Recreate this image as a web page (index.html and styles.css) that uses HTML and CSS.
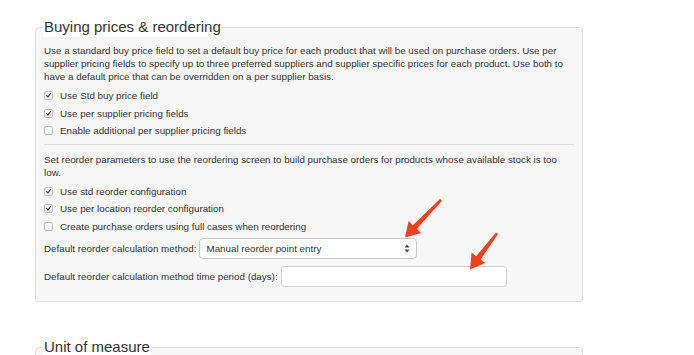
FILE: index.html
```html
<!DOCTYPE html>
<html lang="en">
<head>
    <meta charset="UTF-8">
    <title>Buying prices &amp; reordering</title>
    <link rel="stylesheet" href="styles.css">
</head>
<body>
    <div class="page">
        <fieldset class="panel">
            <legend>Buying prices &amp; reordering</legend>
            <p>Use a standard buy price field to set a default buy price for each product that will be used on purchase orders. Use per supplier pricing fields to specify up to three preferred suppliers and supplier specific prices for each product. Use both to have a default price that can be overridden on a per supplier basis.</p>
            <div class="checks">
                <label class="check"><span class="box checked"></span>Use Std buy price field</label>
                <label class="check"><span class="box checked"></span>Use per supplier pricing fields</label>
                <label class="check"><span class="box"></span>Enable additional per supplier pricing fields</label>
            </div>
            <hr>
            <p>Set reorder parameters to use the reordering screen to build purchase orders for products whose available stock is too low.</p>
            <div class="checks">
                <label class="check"><span class="box checked"></span>Use std reorder configuration</label>
                <label class="check"><span class="box checked"></span>Use per location reorder configuration</label>
                <label class="check"><span class="box"></span>Create purchase orders using full cases when reordering</label>
            </div>
            <div class="field">
                <span class="label">Default reorder calculation method:</span>
                <div class="select">
                    <span>Manual reorder point entry</span>
                    <svg class="updown" width="6" height="9" viewBox="0 0 6 9"><path d="M3 0.5 L5.5 3.5 H0.5 Z M3 8.5 L5.5 5.5 H0.5 Z" fill="#444"/></svg>
                </div>
            </div>
            <div class="field">
                <span class="label">Default reorder calculation method time period (days):</span>
                <input class="text" type="text">
            </div>
        </fieldset>

        <fieldset class="panel next">
            <legend>Unit of measure</legend>
        </fieldset>
    </div>

    <!-- annotation arrows -->
    <svg class="arrows" width="694" height="355" viewBox="0 0 694 355">
        <polygon points="405,237.5 421,233 416.8,228.8 442,200.8 440,199 412.8,225.2 408.6,221" fill="#f2401e"/>
        <polygon points="470,269.5 485.2,263 480.6,259.4 498,234 496,232.4 476.2,256.2 471.6,252.6" fill="#f2401e"/>
    </svg>
</body>
</html>
```

FILE: styles.css
```css
body {
    margin: 0;
    background: #fff;
    font-family: "Liberation Sans", Arial, sans-serif;
    font-size: 9.8px;
    color: #333;
}
.page {
    padding: 17px 0 0 35px;
    width: 548px;
}
.panel {
    margin: 0;
    padding: 2px 8px 14px 8px;
    border: 1px solid #e1e1e1;
    border-radius: 4px;
    background: #f7f7f7;
    min-width: 0;
}
.panel legend {
    font-size: 15px;
    padding: 0 1px;
    margin-left: -1px;
    background: #fff;
    line-height: 20px;
}
.panel.next {
    margin-top: 35px;
    height: 30px;
}
p {
    margin: 5px 0 4px;
    line-height: 13px;
}
.checks {
    margin-bottom: 2px;
}
.check {
    display: flex;
    align-items: center;
    height: 17.5px;
}
.box {
    width: 9px;
    height: 9px;
    margin-right: 7px;
    border: 1px solid #bdbdbd;
    border-radius: 2px;
    background: linear-gradient(#fff, #ececec);
    position: relative;
    box-sizing: border-box;
}
.box.checked::after {
    content: "";
    position: absolute;
    left: 2px;
    top: 0px;
    width: 2px;
    height: 4px;
    border: solid #333;
    border-width: 0 1.5px 1.5px 0;
    transform: rotate(40deg);
}
hr {
    border: 0;
    border-top: 1px solid #ddd;
    margin: 4px 0 8px;
}
.field {
    display: flex;
    align-items: center;
    margin-top: 7px;
}
.checks + .field {
    margin-top: 3px;
}
.label {
    margin-right: 3px;
}
.select {
    display: flex;
    align-items: center;
    justify-content: space-between;
    box-sizing: border-box;
    width: 218px;
    height: 21px;
    padding: 0 6px 0 6px;
    background: #fff;
    border: 1px solid #c8c8c8;
    border-radius: 4px;
}
.text {
    box-sizing: border-box;
    width: 226px;
    height: 21px;
    margin: 0;
    border: 1px solid #cfcfcf;
    border-radius: 3px;
    background: #fff;
}
.arrows {
    position: absolute;
    left: 0;
    top: 0;
    pointer-events: none;
}
```
